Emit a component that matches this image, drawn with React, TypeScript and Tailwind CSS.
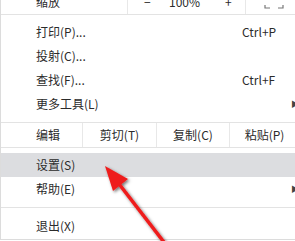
import React from "react";

const font = { fontFamily: '"Noto Sans CJK SC", "Noto Sans", sans-serif' };

function Item({ label, shortcut, sub, active }: { label: string; shortcut?: string; sub?: boolean; active?: boolean }) {
  return (
    <div className={`flex h-[24px] items-center pl-[35px] ${active ? "bg-[#dcdde0]" : ""}`}>
      <span className={shortcut ? "w-[206px]" : "w-[255px]"}>{label}</span>
      {shortcut && <span>{shortcut}</span>}
      {sub && <span className="text-[8px] leading-none text-[#444]">▶</span>}
    </div>
  );
}

export default function App() {
  return (
    <div className="relative h-[241px] w-[295px] overflow-hidden bg-white text-[12px] text-[#2b2b2b]" style={font}>
      <div className="-mt-[10px] w-[310px] border-b border-l border-[#dcdcdc]">
        <div className="flex h-[25px] items-center border-b border-[#e3e3e3]">
          <div className="flex h-full w-[127px] items-center border-r border-[#e8e8e8] pl-[35px]">缩放</div>
          <div className="flex h-full w-[118px] items-center border-r border-[#e8e8e8]">
            <span className="ml-[16px] w-[25px]">−</span>
            <span className="w-[56px]">100%</span>
            <span>+</span>
          </div>
          <div className="flex h-full items-center pl-[18px]">
            <svg width="20" height="16" viewBox="0 0 20 16" fill="none" stroke="#777" strokeWidth="1.2">
              <path d="M1 4 V1 H5" />
              <path d="M19 4 V1 H15" />
              <path d="M1 11 V14 H6" />
              <path d="M19 11 V14 H14" />
            </svg>
          </div>
        </div>
        <div className="pt-[5px]">
          <Item label="打印(P)..." shortcut="Ctrl+P" />
          <Item label="投射(C)..." />
          <Item label="查找(F)..." shortcut="Ctrl+F" />
          <Item label="更多工具(L)" sub />
        </div>
        <div className="mt-[6px] flex h-[26px] items-center border-y border-[#e3e3e3]">
          <div className="flex h-full w-[82px] items-center border-r border-[#e8e8e8] pl-[35px]">编辑</div>
          <div className="flex h-full w-[74px] items-center justify-center border-r border-[#e8e8e8]">剪切(T)</div>
          <div className="flex h-full w-[73px] items-center justify-center border-r border-[#e8e8e8]">复制(C)</div>
          <div className="flex h-full w-[69px] items-center justify-center">粘贴(P)</div>
        </div>
        <div className="pt-[5px]">
          <Item label="设置(S)" active />
          <Item label="帮助(E)" sub />
        </div>
        <div className="my-[6px] border-t border-[#e3e3e3]" />
        <div className="pb-[1px]">
          <Item label="退出(X)" />
        </div>
      </div>
      <svg className="pointer-events-none absolute left-0 top-0" width="295" height="241" viewBox="0 0 295 241">
        <defs>
          <filter id="sh" x="-50%" y="-50%" width="200%" height="200%">
            <feDropShadow dx="1.5" dy="1.5" stdDeviation="1.5" floodColor="#000" floodOpacity="0.55" />
          </filter>
        </defs>
        <g filter="url(#sh)">
          <line x1="170" y1="250" x2="116" y2="180" stroke="#ee1c1c" strokeWidth="3.5" />
          <polygon points="105,166 128,179 113,191" fill="#ee1c1c" />
        </g>
      </svg>
    </div>
  );
}
